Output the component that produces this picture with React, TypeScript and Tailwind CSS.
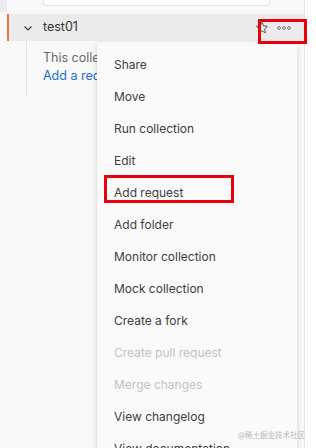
import React from "react";

const menuItems: { label: string; disabled?: boolean }[] = [
  { label: "Share" },
  { label: "Move" },
  { label: "Run collection" },
  { label: "Edit" },
  { label: "Add request" },
  { label: "Add folder" },
  { label: "Monitor collection" },
  { label: "Mock collection" },
  { label: "Create a fork" },
  { label: "Create pull request", disabled: true },
  { label: "Merge changes", disabled: true },
  { label: "View changelog" },
  { label: "View documentation" },
];

const Chevron = () => (
  <svg width="10" height="10" viewBox="0 0 10 10" fill="none">
    <path d="M1.5 3.5 L5 7 L8.5 3.5" stroke="#3a3a3a" strokeWidth="1.2" />
  </svg>
);

const Star = () => (
  <svg width="14" height="14" viewBox="0 0 16 16" fill="none">
    <path
      d="M8 1.5 L9.9 5.6 L14.3 6.1 L11 9.1 L11.9 13.5 L8 11.3 L4.1 13.5 L5 9.1 L1.7 6.1 L6.1 5.6 Z"
      stroke="#555"
      strokeWidth="1.1"
      strokeLinejoin="round"
    />
  </svg>
);

const Dots = () => (
  <svg width="14" height="4" viewBox="0 0 14 4" fill="none">
    <circle cx="2" cy="2" r="1.4" stroke="#6b6b6b" strokeWidth="0.9" />
    <circle cx="7" cy="2" r="1.4" stroke="#6b6b6b" strokeWidth="0.9" />
    <circle cx="12" cy="2" r="1.4" stroke="#6b6b6b" strokeWidth="0.9" />
  </svg>
);

export default function App() {
  return (
    <div className="relative w-[316px] h-[448px] overflow-hidden bg-[#f9f9f9] font-['Inter','Noto_Sans',sans-serif]">
      <div className="flex h-full">
        <div className="w-[7px] shrink-0 flex flex-col">
          <div className="h-[12px] bg-[#ececec]" />
        </div>
        <div className="w-[298px] shrink-0 flex flex-col border-r border-[#e6e6e6]">
          {/* search box remains */}
          <div className="h-[6px] pl-[36px]">
            <div className="w-[227px] h-[6px] bg-white border border-t-0 border-[#e3e3e3] rounded-b-[3px]" />
          </div>

          {/* collection row */}
          <div className="mt-[8px] h-[27px] flex items-center bg-[#ebebeb] border-l-2 border-[#f0703f]">
            <div className="w-[34px] flex justify-center pl-[4px]">
              <Chevron />
            </div>
            <span className="text-[12.5px] text-[#333333]">test01</span>
            <div className="ml-auto flex items-center gap-[8px] pr-[13px]">
              <Star />
              <Dots />
            </div>
          </div>

          {/* collection body */}
          <div className="flex">
            <div className="w-[19px] shrink-0" />
            <div className="border-l border-[#e1e1e1] h-[55px] pl-[16px] pt-[8px] text-[12.5px] leading-[18px]">
              <div className="text-[#6b6b6b] whitespace-nowrap">This collection is empty.</div>
              <div className="text-[#1d6fd1] whitespace-nowrap">Add a request</div>
            </div>
          </div>
        </div>
        <div className="flex-1 bg-[#fdfdfd]" />
      </div>

      {/* dropdown menu */}
      <div className="absolute left-[97px] top-[43px] w-[200px] bg-[#fafafa] pt-[6px] shadow-[0_2px_6px_rgba(0,0,0,0.16)]">
        {menuItems.map((item) => (
          <div
            key={item.label}
            className={`h-[32px] flex items-center px-[17px] text-[12px] whitespace-nowrap ${
              item.disabled ? "text-[#c2c2c2]" : "text-[#3d3d3d]"
            }`}
          >
            {item.label}
          </div>
        ))}
      </div>

      {/* annotation boxes */}
      <div className="absolute left-[258px] top-[19px] w-[49px] h-[25px] border-[3px] border-[#e8000b]" />
      <div className="absolute left-[104px] top-[175px] w-[130px] h-[28px] border-[3px] border-[#e8000b]" />

      {/* watermark */}
      <div className="absolute right-[11px] top-[429px] text-[7.5px] text-[#b8b8b8] font-['Noto_Sans_CJK_SC',sans-serif]">
        @稀土掘金技术社区
      </div>
    </div>
  );
}
